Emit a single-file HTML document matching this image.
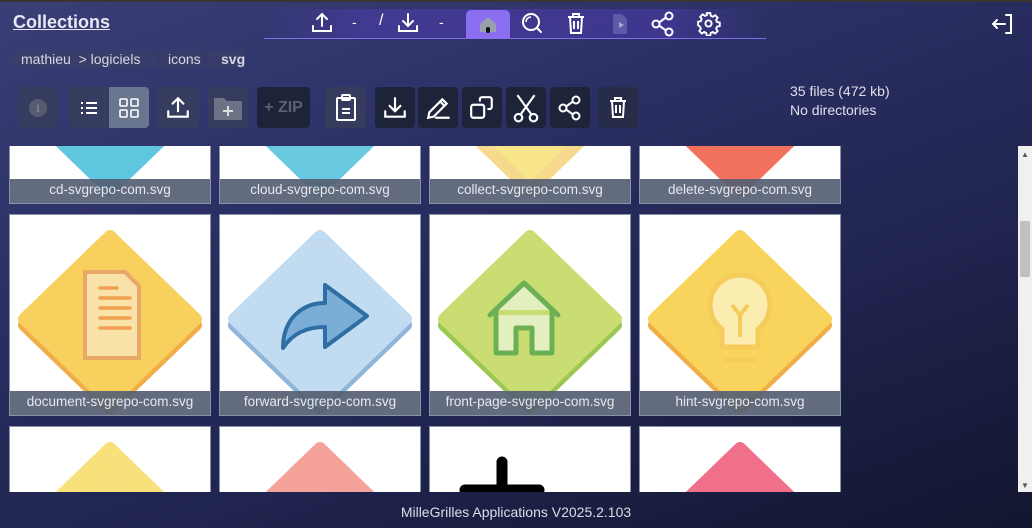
<!DOCTYPE html>
<html><head><meta charset="utf-8"><style>
*{box-sizing:border-box;margin:0;padding:0}
html,body{width:1032px;height:528px;overflow:hidden}
body{font-family:"Liberation Sans",sans-serif;color:#fff;
background:linear-gradient(160deg,#3a3f78 0%,#2c3166 30%,#20244f 65%,#12162f 100%);position:relative}
.top{position:absolute;left:0;top:0;width:1032px;height:2px;background:#3b3430}
.title{position:absolute;left:13px;top:12px;font-size:18px;font-weight:bold;text-decoration:underline;color:#e8e8f0}
.nav{position:absolute;left:264px;top:9px;width:502px;height:30px;border-bottom:1px solid #7c70e8;background:linear-gradient(90deg,rgba(70,60,160,0) 0%,rgba(80,60,180,.5) 20%,rgba(80,60,180,.5) 80%,rgba(80,60,180,0) 100%)}
.ab{position:absolute}
svg{display:block}
.crumb{position:absolute;top:50px;height:18px;background:rgba(60,64,100,.6);font-size:14px;color:#d8d8e4;line-height:18px}
.btn{position:absolute;top:87px;height:41px;border-radius:4px;display:flex;align-items:center;justify-content:center}
.g1{background:#363c5e}.g2{background:#1d2338}.g3{background:#6a7590}
.stat{position:absolute;left:790px;top:82px;font-size:14px;line-height:19px;color:#dfe0ea}
.scroll{position:absolute;left:0;top:146px;width:1018px;height:346px;overflow:hidden}
.tile{position:absolute;width:202px;height:202px;background:#fff;border:1px solid #8a92a8;overflow:hidden}
.lab{position:absolute;left:0;bottom:0;width:100%;height:24px;background:rgba(85,95,115,.92);font-size:13.5px;color:#e6e8ee;text-align:center;line-height:22px}
.sb{position:absolute;left:1018px;top:146px;width:14px;height:346px;background:#f0f0f0}
.foot{position:absolute;left:0;width:1032px;top:504px;text-align:center;font-size:14px;color:#dcdde6}
.d{stroke-linejoin:round;stroke-width:12}
</style></head><body>
<div class="top"></div>
<div class="title">Collections</div>
<div class="nav"></div>
<svg class="ab" style="left:310px;top:11px" width="24" height="24" viewBox="0 0 24 24" fill="none" stroke="#fff" stroke-width="2" stroke-linecap="round"><path d="M12 15V3M7 8l5-5 5 5M3 15v5h18v-5"/></svg>
<div class="ab" style="left:352px;top:14px;font-size:14px">-</div>
<div class="ab" style="left:379px;top:12px;font-size:16px">/</div>
<svg class="ab" style="left:396px;top:11px" width="24" height="24" viewBox="0 0 24 24" fill="none" stroke="#fff" stroke-width="2" stroke-linecap="round"><path d="M12 3v12M7 10l5 5 5-5M3 15v5h18v-5"/></svg>
<div class="ab" style="left:439px;top:14px;font-size:14px">-</div>
<div class="ab" style="left:466px;top:10px;width:44px;height:29px;background:#8c6ef0;border-radius:5px 5px 0 0"></div>
<svg class="ab" style="left:477px;top:13px" width="22" height="22" viewBox="0 0 22 22"><path d="M3 11L11 4l8 7v8H3z" fill="#9aa0b0"/><rect x="9" y="14" width="4" height="6" rx="2" fill="#111"/></svg>
<svg class="ab" style="left:520px;top:11px" width="24" height="24" viewBox="0 0 24 24" fill="none" stroke="#fff" stroke-width="2"><circle cx="11" cy="11" r="8"/><path d="M17 17l4 4" stroke-linecap="round"/><path d="M6 11a5 5 0 0 1 5-5" stroke-width="1.5"/></svg>
<svg class="ab" style="left:565px;top:12px" width="22" height="24" viewBox="0 0 22 24" fill="none" stroke="#fff" stroke-width="2"><path d="M3 5h16M8 5V2h6v3M5 5l1 16h10l1-16M9 9v8M13 9v8"/></svg>
<svg class="ab" style="left:611px;top:12px" width="18" height="24" viewBox="0 0 18 24"><path d="M2 2h9l5 5v15H2z" fill="#5e5aa8"/><path d="M8 10v6l5-3z" fill="#a9a6da"/></svg>
<svg class="ab" style="left:650px;top:11px" width="26" height="26" viewBox="0 0 26 26" fill="none" stroke="#fff" stroke-width="2"><circle cx="19" cy="5" r="3.5"/><circle cx="19" cy="21" r="3.5"/><circle cx="6" cy="13" r="3.5"/><path d="M9 11.5l7-5M9 14.5l7 5"/></svg>
<svg class="ab" style="left:696px;top:11px" width="25" height="25" viewBox="0 0 24 24" fill="none" stroke="#fff" stroke-width="1.8"><circle cx="12" cy="12" r="3"/><path d="M10.3 2h3.4l.5 2.6 2 .9 2.2-1.5 2.4 2.4-1.5 2.2.9 2 2.6.5v3.4l-2.6.5-.9 2 1.5 2.2-2.4 2.4-2.2-1.5-2 .9-.5 2.6h-3.4l-.5-2.6-2-.9-2.2 1.5-2.4-2.4 1.5-2.2-.9-2L2 13.7v-3.4l2.6-.5.9-2L4 5.6 6.4 3.2l2.2 1.5 2-.9z"/></svg>
<svg class="ab" style="left:990px;top:12px" width="26" height="24" viewBox="0 0 26 24" fill="none" stroke="#fff" stroke-width="2" stroke-linecap="round"><path d="M16 3h5v18h-5M3 12h12M7 8l-4 4 4 4"/></svg>

<div class="crumb" style="left:13px;width:144px;padding-left:8px">mathieu &nbsp;&gt; logiciels</div>
<div class="crumb" style="left:160px;width:44px;padding-left:8px">icons</div>
<div class="crumb" style="left:207px;width:38px;padding-left:14px;font-weight:bold">svg</div>

<div class="btn g1" style="left:18px;width:40px"><div style="width:18px;height:18px;border-radius:50%;background:#555c70;color:#9aa0b0;font-size:12px;text-align:center;line-height:18px;font-family:'Liberation Serif',serif">i</div></div>
<div class="btn g1" style="left:69px;width:40px;border-radius:4px 0 0 4px"><svg width="18" height="14" viewBox="0 0 18 14" stroke="#fff" stroke-width="2"><path d="M1 2h2M6 2h11M1 7h2M6 7h11M1 12h2M6 12h11"/></svg></div>
<div class="btn g3" style="left:109px;width:40px;border-radius:0 4px 4px 0"><svg width="20" height="20" viewBox="0 0 20 20" fill="none" stroke="#fff" stroke-width="1.6"><rect x="1" y="1" width="7" height="7" rx="1"/><rect x="12" y="1" width="7" height="7" rx="1"/><rect x="1" y="12" width="7" height="7" rx="1"/><rect x="12" y="12" width="7" height="7" rx="1"/></svg></div>
<div class="btn g1" style="left:157px;width:42px"><svg width="26" height="26" viewBox="0 0 24 24" fill="none" stroke="#fff" stroke-width="2" stroke-linecap="round"><path d="M12 15V3M7 8l5-5 5 5M3 15v5h18v-5"/></svg></div>
<div class="btn g1" style="left:208px;width:40px"><svg width="30" height="26" viewBox="0 0 30 26"><path d="M1 3h10l3 3h15v19H1z" fill="#6b7385"/><path d="M15 11v10M10 16h10" stroke="#ddd" stroke-width="2"/></svg></div>
<div class="btn g2" style="left:257px;width:53px;font-size:16px;font-weight:bold;color:#5a6172">+ ZIP</div>
<div class="btn g1" style="left:325px;width:41px"><svg width="22" height="28" viewBox="0 0 22 28" fill="none" stroke="#fff" stroke-width="2"><rect x="2" y="4" width="18" height="22" rx="1"/><rect x="7" y="1" width="8" height="5" rx="1"/><path d="M7 15h8M7 19h8"/></svg></div>
<div class="btn g2" style="left:375px;width:40px"><svg width="26" height="26" viewBox="0 0 24 24" fill="none" stroke="#fff" stroke-width="2" stroke-linecap="round"><path d="M12 3v12M7 10l5 5 5-5M3 15v5h18v-5"/></svg></div>
<div class="btn g2" style="left:418px;width:40px"><svg width="26" height="26" viewBox="0 0 24 24" fill="none" stroke="#fff" stroke-width="2" stroke-linecap="round"><path d="M3 21l1-5L16 4l4 4L8 20zM14 6l4 4M10 21h12"/></svg></div>
<div class="btn g2" style="left:462px;width:40px"><svg width="26" height="26" viewBox="0 0 24 24" fill="none" stroke="#fff" stroke-width="2"><rect x="2" y="9" width="12" height="12" rx="2"/><path d="M10 6V4a2 2 0 0 1 2-2h7a2 2 0 0 1 2 2v7a2 2 0 0 1-2 2h-2"/></svg></div>
<div class="btn g2" style="left:506px;width:40px"><svg width="26" height="30" viewBox="0 0 24 28" fill="none" stroke="#fff" stroke-width="2"><circle cx="5" cy="23" r="3.5"/><circle cx="19" cy="23" r="3.5"/><path d="M4 2l13 18M20 2L7 20"/></svg></div>
<div class="btn g2" style="left:550px;width:40px"><svg width="26" height="26" viewBox="0 0 26 26" fill="none" stroke="#fff" stroke-width="2"><circle cx="19" cy="5" r="3.5"/><circle cx="19" cy="21" r="3.5"/><circle cx="6" cy="13" r="3.5"/><path d="M9 11.5l7-5M9 14.5l7 5"/></svg></div>
<div class="btn g1" style="left:598px;width:40px;background:#272d48"><svg width="22" height="26" viewBox="0 0 22 24" fill="none" stroke="#fff" stroke-width="2"><path d="M3 5h16M8 5V2h6v3M5 5l1 16h10l1-16M9 9v8M13 9v8"/></svg></div>

<div class="stat">35 files (472 kb)<br>No directories</div>

<div class="scroll">
<div class="tile" style="left:9px;top:-144px"><svg width="200" height="200"><path class="d" d="M100 21l86 83-86 83-86-83z" fill="#5ec6de" stroke="#5ec6de"/></svg><div class="lab">cd-svgrepo-com.svg</div></div>
<div class="tile" style="left:219px;top:-144px"><svg width="200" height="200"><path class="d" d="M100 21l86 83-86 83-86-83z" fill="#69c9e0" stroke="#69c9e0"/></svg><div class="lab">cloud-svgrepo-com.svg</div></div>
<div class="tile" style="left:429px;top:-144px"><svg width="200" height="200"><path class="d" d="M100 21l86 83-86 83-86-83z" fill="#f8e58a" stroke="#f6d98c"/></svg><div class="lab">collect-svgrepo-com.svg</div></div>
<div class="tile" style="left:639px;top:-144px"><svg width="200" height="200"><path class="d" d="M100 21l86 83-86 83-86-83z" fill="#f2705e" stroke="#f2705e"/></svg><div class="lab">delete-svgrepo-com.svg</div></div>

<div class="tile" style="left:9px;top:68px"><svg width="200" height="200"><path class="d" d="M100 27l86 83-86 83-86-83z" fill="#f0ad48" stroke="#f0ad48"/><path class="d" d="M100 21l86 83-86 83-86-83z" fill="#f8d05e" stroke="#f8d05e"/><path d="M75 57h40l14 14v72H75z" fill="#f8e2a8" stroke="#e8a868" stroke-width="4"/><path d="M90 73h17M90 83h30M90 93h30M90 103h30M90 113h30" stroke="#f0a050" stroke-width="3.5" stroke-linecap="round"/></svg><div class="lab">document-svgrepo-com.svg</div></div>
<div class="tile" style="left:219px;top:68px"><svg width="200" height="200"><path class="d" d="M100 27l86 83-86 83-86-83z" fill="#8eb6da" stroke="#8eb6da"/><path class="d" d="M100 21l86 83-86 83-86-83z" fill="#c1dcf0" stroke="#c1dcf0"/><path d="M63 133c0-30 20-45 42-45V70l42 31-42 31v-20c-18 0-32 6-42 21z" fill="#7aaed6" stroke="#2e6ea4" stroke-width="4" stroke-linejoin="round"/></svg><div class="lab">forward-svgrepo-com.svg</div></div>
<div class="tile" style="left:429px;top:68px"><svg width="200" height="200"><path class="d" d="M100 27l86 83-86 83-86-83z" fill="#9bc850" stroke="#9bc850"/><path class="d" d="M100 21l86 83-86 83-86-83z" fill="#c9dd72" stroke="#c9dd72"/><path d="M60 100l34-32 34 32M66 95v43h20v-25h16v25h20V95" fill="#e4efc0" stroke="#6bb054" stroke-width="5" stroke-linejoin="round" stroke-linecap="round"/></svg><div class="lab">front-page-svgrepo-com.svg</div></div>
<div class="tile" style="left:639px;top:68px"><svg width="200" height="200"><path class="d" d="M100 27l86 83-86 83-86-83z" fill="#f0ad48" stroke="#f0ad48"/><path class="d" d="M100 21l86 83-86 83-86-83z" fill="#f8d45c" stroke="#f8d45c"/><path d="M100 60a30 30 0 0 0-18 54v18h36v-18a30 30 0 0 0-18-54z" fill="#fbedb0" stroke="#f5cc5c" stroke-width="5"/><path d="M92 90l8 10 8-10M100 100v22" stroke="#f5cc5c" stroke-width="4" fill="none"/><path d="M84 145h32" stroke="#f5cc5c" stroke-width="4"/></svg><div class="lab">hint-svgrepo-com.svg</div></div>

<div class="tile" style="left:9px;top:280px"><svg width="200" height="200"><path class="d" d="M100 21l86 83-86 83-86-83z" fill="#f8e07a" stroke="#f8e07a"/><circle cx="100" cy="100" r="32" fill="#fde7b0" stroke="#f6cf8c" stroke-width="4"/></svg></div>
<div class="tile" style="left:219px;top:280px"><svg width="200" height="200"><path class="d" d="M100 21l86 83-86 83-86-83z" fill="#f4a29a" stroke="#f4a29a"/><circle cx="100" cy="100" r="30" fill="#f6b2a0" stroke="#ee7458" stroke-width="4"/></svg></div>
<div class="tile" style="left:429px;top:280px"><svg width="200" height="200"><path d="M72 35v28M35 63h74" stroke="#000" stroke-width="11" stroke-linecap="round"/></svg></div>
<div class="tile" style="left:639px;top:280px"><svg width="200" height="200"><path class="d" d="M100 21l86 83-86 83-86-83z" fill="#ef7088" stroke="#ef7088"/></svg></div>
</div>
<div class="sb"><div style="position:absolute;left:2px;top:75px;width:10px;height:56px;background:#c0c0c0;border-radius:2px"></div><div style="position:absolute;left:3px;top:4px;font-size:8px;color:#555">▲</div><div style="position:absolute;left:3px;bottom:2px;font-size:8px;color:#555">▼</div></div>
<div class="foot">MilleGrilles Applications V2025.2.103</div>
</body></html>
